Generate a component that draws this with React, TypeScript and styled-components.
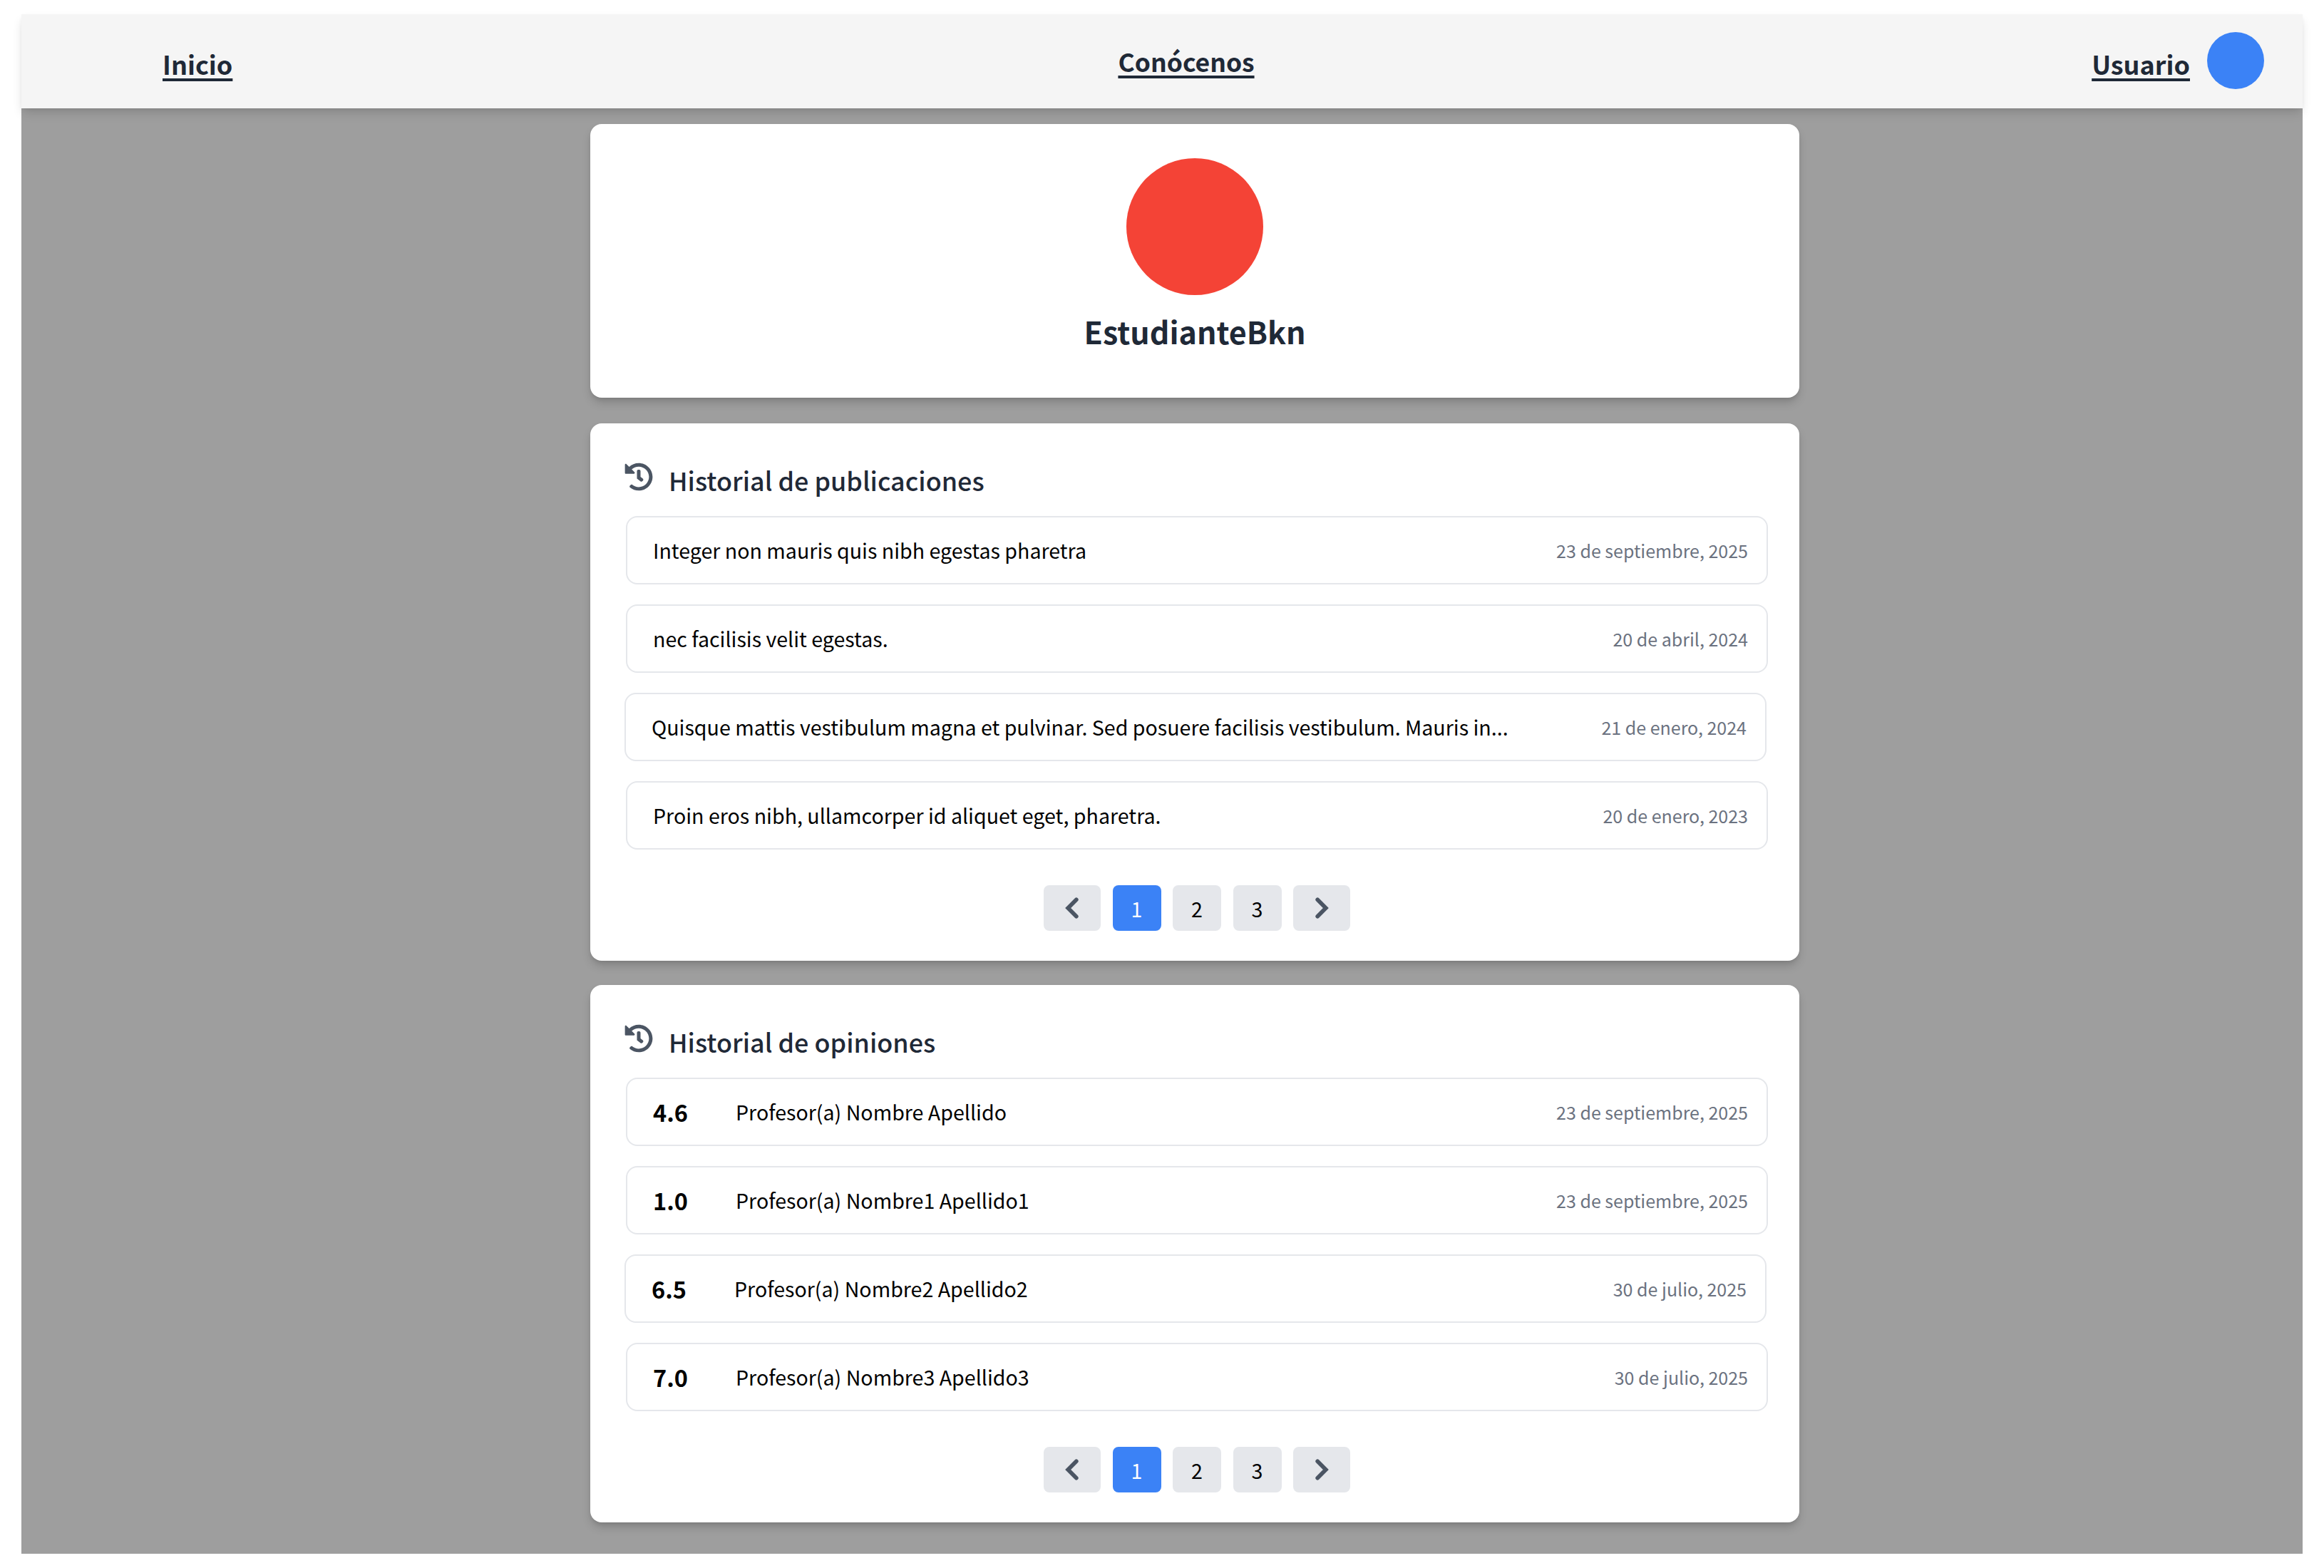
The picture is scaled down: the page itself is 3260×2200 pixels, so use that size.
import React from 'react';
import styled, { createGlobalStyle } from 'styled-components';
import { FaHistory } from 'react-icons/fa';

const GlobalStyle = createGlobalStyle`
  html, body {
    margin: 0;
    background: #fff;
    font-family: "Noto Sans CJK SC", "Noto Sans", sans-serif;
  }
`;

const posts = [
  { text: 'Integer non mauris quis nibh egestas pharetra', date: '23 de septiembre, 2025' },
  { text: 'nec facilisis velit egestas.', date: '20 de abril, 2024' },
  { text: 'Quisque mattis vestibulum magna et pulvinar. Sed posuere facilisis vestibulum. Mauris in...', date: '21 de enero, 2024', shifted: true },
  { text: 'Proin eros nibh, ullamcorper id aliquet eget, pharetra.', date: '20 de enero, 2023' }
];

const reviews = [
  { score: '4.6', text: 'Profesor(a) Nombre Apellido', date: '23 de septiembre, 2025' },
  { score: '1.0', text: 'Profesor(a) Nombre1 Apellido1', date: '23 de septiembre, 2025' },
  { score: '6.5', text: 'Profesor(a) Nombre2 Apellido2', date: '30 de julio, 2025', shifted: true },
  { score: '7.0', text: 'Profesor(a) Nombre3 Apellido3', date: '30 de julio, 2025' }
];

const Chevron: React.FC<{ d: string }> = ({ d }) => (
  <svg width="40" height="40" viewBox="0 0 24 24" fill="none" stroke="currentColor" strokeWidth="3.4" strokeLinecap="round" strokeLinejoin="miter">
    <path d={d} />
  </svg>
);

const Pager: React.FC = () => (
  <PagerRow>
    <ArrowButton><Chevron d="M15.5 5l-7 7 7 7" /></ArrowButton>
    <PageButton $active>1</PageButton>
    <PageButton>2</PageButton>
    <PageButton>3</PageButton>
    <ArrowButton><Chevron d="M8.5 5l7 7-7 7" /></ArrowButton>
  </PagerRow>
);

const App: React.FC = () => (
  <Frame>
    <GlobalStyle />
    <Header>
      <NavLink href="#">Inicio</NavLink>
      <CenterLink href="#">Conócenos</CenterLink>
      <UserArea>
        <NavLink href="#">Usuario</NavLink>
        <UserDot />
      </UserArea>
    </Header>
    <Main>
      <ProfileCard>
        <Avatar />
        <UserName>EstudianteBkn</UserName>
      </ProfileCard>
      <Card>
        <CardTitle><TitleIcon><FaHistory /></TitleIcon>Historial de publicaciones</CardTitle>
        <List>
          {posts.map(p => (
            <Row key={p.text} $shifted={p.shifted}>
              <RowText>{p.text}</RowText>
              <RowDate>{p.date}</RowDate>
            </Row>
          ))}
        </List>
        <Pager />
      </Card>
      <Card>
        <CardTitle><TitleIcon><FaHistory /></TitleIcon>Historial de opiniones</CardTitle>
        <List>
          {reviews.map(r => (
            <Row key={r.text} $shifted={r.shifted}>
              <Score>{r.score}</Score>
              <RowText>{r.text}</RowText>
              <RowDate>{r.date}</RowDate>
            </Row>
          ))}
        </List>
        <Pager />
      </Card>
    </Main>
  </Frame>
);

export default App;

const Frame = styled.div`
  margin: 20px 30px;
  height: 2160px;
  display: flex;
  flex-direction: column;
  background: #9e9e9e;
`;

const Header = styled.header`
  height: 132px;
  flex: none;
  padding: 0 54px 0 198px;
  display: grid;
  grid-template-columns: 1fr auto 1fr;
  align-items: center;
  background: #f5f5f5;
  box-shadow: 0 8px 14px -2px rgba(0, 0, 0, 0.14), 0 2px 6px -2px rgba(0, 0, 0, 0.08);
  position: relative;
`;

const NavLink = styled.a`
  justify-self: start;
  padding-top: 6px;
  font-size: 36px;
  line-height: 56px;
  font-weight: 700;
  color: #1f2937;
  text-decoration-thickness: 4px;
  text-underline-offset: 5px;
`;

const CenterLink = styled(NavLink)`
  padding-top: 0;
  margin: 0 76px 1px 0;
  font-size: 35.5px;
`;

const UserArea = styled.div`
  justify-self: end;
  display: flex;
  align-items: center;
  gap: 24px;
`;

const UserDot = styled.span`
  width: 80px;
  height: 80px;
  margin-bottom: 2px;
  border-radius: 50%;
  background: #3b82f6;
`;

const Main = styled.main`
  flex: 1;
  padding: 22px 0 0 92px;
  display: flex;
  flex-direction: column;
  align-items: center;
  gap: 34px;
`;

const Card = styled.section`
  box-sizing: border-box;
  width: 1696px;
  padding: 51px 44px 42px 50px;
  background: #fff;
  border-radius: 16px;
  box-shadow: 0 8px 14px -2px rgba(0, 0, 0, 0.18), 0 3px 6px -2px rgba(0, 0, 0, 0.1);
`;

const ProfileCard = styled(Card)`
  height: 384px;
  margin-bottom: 2px;
  padding: 48px 0 0;
  display: flex;
  flex-direction: column;
  align-items: center;
`;

const Avatar = styled.div`
  width: 192px;
  height: 192px;
  border-radius: 50%;
  background: #f44336;
`;

const UserName = styled.h1`
  margin: 18px 0 0;
  font-size: 43px;
  line-height: 64px;
  font-weight: 700;
  color: #1f2937;
`;

const CardTitle = styled.h2`
  margin: 0 0 23px;
  height: 56px;
  display: flex;
  align-items: center;
  font-size: 35.9px;
  line-height: 56px;
  font-weight: 500;
  color: #1f2937;
`;

const TitleIcon = styled.span`
  display: flex;
  margin: -8px 22px 0 -2px;
  font-size: 40px;
  color: #4b5563;
`;

const List = styled.div`
  display: flex;
  flex-direction: column;
  gap: 28px;
`;

const Row = styled.div<{ $shifted?: boolean }>`
  box-sizing: border-box;
  height: 96px;
  padding: 0 26px 0 36px;
  display: flex;
  align-items: center;
  border: 2.5px solid #e5e7eb;
  border-radius: 16px;
  transform: translateX(${p => (p.$shifted ? '-2px' : '0')});
`;

const RowText = styled.span`
  flex: 1;
  white-space: nowrap;
  font-size: 28.6px;
  line-height: 44px;
  color: #000;
`;

const RowDate = styled.span`
  font-size: 25px;
  line-height: 40px;
  color: #6b7280;
`;

const Score = styled.span`
  width: 116px;
  font-size: 32.5px;
  line-height: 44px;
  font-weight: 700;
  color: #000;
`;

const PagerRow = styled.div`
  margin-top: 50px;
  display: flex;
  justify-content: center;
  gap: 16.5px;
`;

const PageButton = styled.button<{ $active?: boolean }>`
  width: 68px;
  height: 64px;
  padding: 0;
  border: 0;
  border-radius: 8px;
  font: inherit;
  font-size: 28.6px;
  line-height: 66px;
  color: ${p => (p.$active ? '#fff' : '#000')};
  background: ${p => (p.$active ? '#3b82f6' : '#e5e7eb')};
`;

const ArrowButton = styled(PageButton)`
  width: 80px;
  display: flex;
  align-items: center;
  justify-content: center;
  color: #4b5563;
`;
